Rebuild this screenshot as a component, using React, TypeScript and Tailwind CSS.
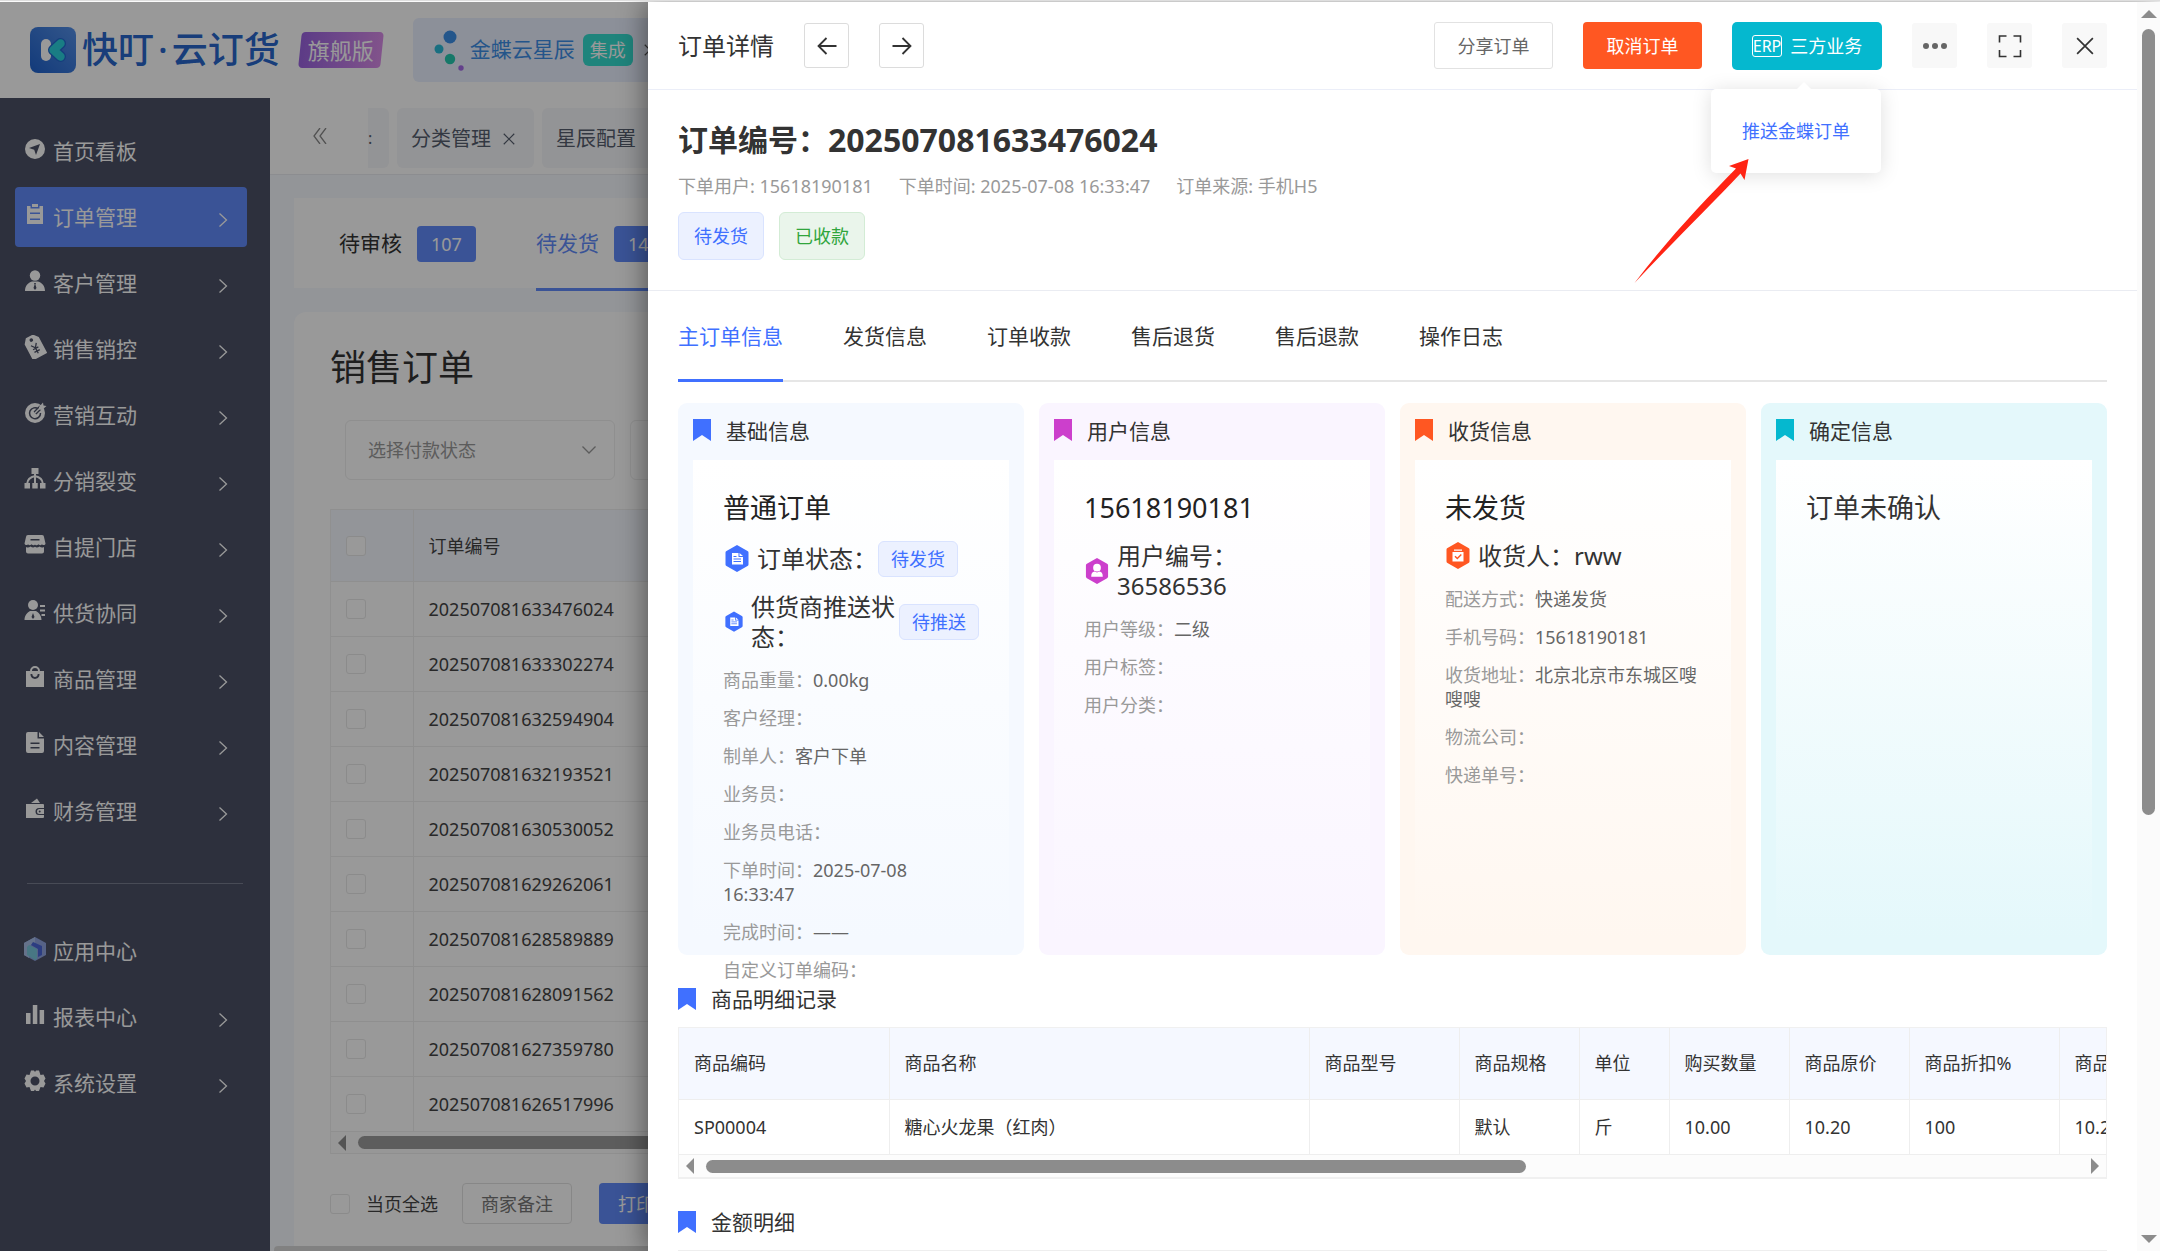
import React from "react";

type IconProps = { className?: string };

/* ---------- Sidebar icons (24 x 24 grid, solid) ---------- */

const NavIcon = ({ children }: { children: React.ReactNode }) => (
  <svg viewBox="0 0 24 24" className="mb-1 size-6 shrink-0" fill="currentColor" aria-hidden="true">
    {children}
  </svg>
);

const ICONS: Record<string, React.ReactNode> = {
  home: (
    <path fillRule="evenodd" d="M12 2a10 10 0 1 0 0 20 10 10 0 0 0 0-20Zm5 5-4 11-1.8-5.2L6 11Z" />
  ),
  order: (
    <>
      <path d="M9 1h6v3H9z" />
      <path fillRule="evenodd" d="M4 3h3.5v2.5h9V3H20v18H4V3Zm3 6.5V11h10V9.500Zm0 6V17h10v-1.500Z" />
    </>
  ),
  user: (
    <>
      <circle cx="12" cy="6.500" r="5.200" />
      <path fillRule="evenodd" d="M2 22c0-5 3-8.500 7-9.500h6c4 1 7 4.500 7 9.500Zm9-8 .6 1.500L10.500 19l1.500 2 1.500-2-1.100-3.500L13 14Z" />
    </>
  ),
  tag: (
    <g transform="rotate(-28 12 12)">
      <path fillRule="evenodd" d="M8 0h8l4 5v18H4V5Zm4 2.500a1.700 1.700 0 1 0 0 3.400 1.700 1.700 0 0 0 0-3.400Z" />
      <path d="m9 9 3 4 3-4M12 13v6M9 13.500h6M9 16.500h6" stroke="#4b5066" strokeWidth="1.300" fill="none" />
    </g>
  ),
  target: (
    <>
      <circle cx="12" cy="12" r="10" />
      <path d="M15.500 8a5.500 5.500 0 1 0 2 4" stroke="#4b5066" strokeWidth="1.500" fill="none" />
      <path d="M12 12l6-6" stroke="#4b5066" strokeWidth="4" fill="none" />
      <path d="m16 6 4-4.500.5 3 3 .5-4.500 4-3-.5Z" />
      <path d="M12 12l7-7" stroke="currentColor" strokeWidth="1.500" />
    </>
  ),
  tree: (
    <>
      <path d="M8.500 1h7v6h-7zM1.500 16H7v5.500H1.500zM9.300 16h5.400v5.500H9.300zM17 16h5.500v5.500H17z" />
      <path d="M12 6v10M12 9c-4 1-7.500 3-7.800 7.500M12 9c4 1 7.500 3 7.800 7.500" stroke="currentColor" strokeWidth="2" fill="none" />
    </>
  ),
  store: (
    <>
      <path fillRule="evenodd" d="M5 2h14a2 2 0 0 1 2 2l1.500 6.500c0 2-3.500 2-3.500.5 0 1.500-3.500 1.500-3.500 0 0 1.500-3.500 1.500-3.500.2 0 1.300-3.500 1.300-3.500-.2 0 1.500-3.500 1.500-3.500 0 0 1.500-3 1.500-3.500-.5L3 4a2 2 0 0 1 2-2Zm2.500 4v1.500h9V6Z" />
      <path d="M3 14c2 1 3 .5 4.500-.5 1.500 1 3 1.500 4.500.3 1.500 1.200 3 .7 4.500-.3 1.500 1 2.500 1.500 4.500.5v4.500a2 2 0 0 1-2 2H5a2 2 0 0 1-2-2Z" />
    </>
  ),
  supply: (
    <>
      <circle cx="10" cy="6" r="5" />
      <path fillRule="evenodd" d="M1.500 21c0-4.500 2.500-7 5.500-9h6c3 2 5.500 4.500 5.500 9Zm8.500-7-1.500 4 1.500 2 1.500-2Z" />
      <path d="M17 6h5v2h-5zM17 10.500h5v2h-5zM18.500 15H22v2h-3.500z" />
    </>
  ),
  bag: (
    <>
      <path d="M8 8V6a4 4 0 0 1 8 0v2" stroke="currentColor" strokeWidth="2" fill="none" />
      <path fillRule="evenodd" d="M3 6h18v16H3Zm4.500 3c0 6.500 9 6.500 9 0h-1.800c0 4-5.400 4-5.400 0Z" />
    </>
  ),
  doc: (
    <path fillRule="evenodd" d="M5 1h9.500v6.500H21V20a2 2 0 0 1-2 2H5a2 2 0 0 1-2-2V3a2 2 0 0 1 2-2Zm11 0 5 5h-5ZM7.500 11.500V13h9v-1.500Zm0 4.500v1.500h9V16Z" />
  ),
  wallet: (
    <>
      <path d="m8 6 6-4.500 3 4.500Z" />
      <path fillRule="evenodd" d="M3 7h17a1 1 0 0 1 1 1v3h-5a3.500 3.500 0 0 0 0 7h5v2a1 1 0 0 1-1 1H3Z" />
      <path fillRule="evenodd" d="M16.500 12H21v5h-4.500a2.500 2.500 0 0 1 0-5Zm.2 1.500a1 1 0 1 0 0 2 1 1 0 0 0 0-2Z" />
    </>
  ),
  chart: <path d="M3 10h4.500v11H3zM9.800 2h4.500v19H9.800zM16.600 7h4.500v14h-4.500z" />,
  gear: (
    <path fillRule="evenodd" d="M8 1.500h3l1 1.500 1-1.500h3l1.500 4.500 3-.5 2 4-1.500 2.500 1.500 2.500-2 4-3-.5-1.500 4h-3l-1-1.500-1 1.500H8L6.500 18l-3 .5-2-4L3 12 1.500 9.500l2-4 3 .5Zm4 6a4.500 4.500 0 1 0 0 9 4.500 4.500 0 0 0 0-9Z" />
  ),
  app: (
    <>
      <path d="M12 0l11 6v12l-11 6L1 18V6Z" fill="#8fa3e0" />
      <path d="M1 6l11-6v6L6 9v12l-5-3Z" fill="#a9bfe8" />
      <path d="M10 5l9 4v9l-4 2V12L8 8Z" fill="#4a66d8" />
      <path d="M6 8l8 4v10l-2 1-8-5V10Z" fill="#79c6dc" />
    </>
  ),
};

type NavEntry = { label: string; icon: string; arrow?: boolean; active?: boolean };

const NAV_MAIN: NavEntry[] = [
  { label: "首页看板", icon: "home", arrow: false },
  { label: "订单管理", icon: "order", active: true },
  { label: "客户管理", icon: "user" },
  { label: "销售销控", icon: "tag" },
  { label: "营销互动", icon: "target" },
  { label: "分销裂变", icon: "tree" },
  { label: "自提门店", icon: "store" },
  { label: "供货协同", icon: "supply" },
  { label: "商品管理", icon: "bag" },
  { label: "内容管理", icon: "doc" },
  { label: "财务管理", icon: "wallet" },
];

const NAV_EXTRA: NavEntry[] = [
  { label: "应用中心", icon: "app", arrow: false },
  { label: "报表中心", icon: "chart" },
  { label: "系统设置", icon: "gear" },
];

function NavList({ items }: { items: NavEntry[] }) {
  return (
    <ul className="flex flex-col gap-1.5">
      {items.map((n) => (
        <li key={n.label}>
          <a
            href="#"
            className={
              n.active
                ? "flex h-15 items-center gap-1.5 rounded-sm bg-[#628bfa] pl-2 pr-[19px] text-white"
                : "flex h-15 items-center gap-1.5 rounded-sm pl-2 pr-[19px] text-white"
            }
          >
            <NavIcon>{ICONS[n.icon]}</NavIcon>
            <span className="flex-1 pt-0.5">{n.label}</span>
            {n.arrow !== false && (
              <svg viewBox="0 0 10 16" className="mt-1.5 h-4 w-2.5" fill="none" stroke="currentColor" strokeWidth="1.300" aria-hidden="true">
                <path d="m1.500 1.500 7 6.500-7 6.500" />
              </svg>
            )}
          </a>
        </li>
      ))}
    </ul>
  );
}

/* ---------- Small shared parts ---------- */

const Bookmark = ({ className }: IconProps) => (
  <svg viewBox="0 0 18 22" className={"h-[22px] w-[18px] shrink-0 " + className} fill="currentColor" aria-hidden="true">
    <path d="M0 0h18v22l-9-6-9 6Z" />
  </svg>
);

const Cross = ({ className }: IconProps) => (
  <svg viewBox="0 0 16 16" className={"shrink-0 " + className} fill="none" stroke="currentColor" strokeWidth="1.500" aria-hidden="true">
    <path d="m1 1 14 14M15 1 1 15" />
  </svg>
);

const HexDoc = ({ className }: IconProps) => (
  <svg viewBox="0 0 24 27" className={"shrink-0 " + className} aria-hidden="true">
    <path d="M12 0 22.500 6a2 2 0 0 1 1 1.500v12a2 2 0 0 1-1 1.500L12 27 1.500 21a2 2 0 0 1-1-1.500v-12A2 2 0 0 1 1.500 6Z" fill="#4070ff" />
    <path d="M7 8h6.500v4H18v7.500H7ZM14.500 8 18 11h-3.500Z" fill="#fff" />
    <path d="M8.500 11.500h3M8.500 14h7.500M8.500 16.500h7.500" stroke="#4070ff" strokeWidth="1" />
  </svg>
);

const HexUser = ({ className }: IconProps) => (
  <svg viewBox="0 0 24 27" className={"shrink-0 " + className} aria-hidden="true">
    <path d="M12 0 22.500 6a2 2 0 0 1 1 1.500v12a2 2 0 0 1-1 1.500L12 27 1.500 21a2 2 0 0 1-1-1.500v-12A2 2 0 0 1 1.500 6Z" fill="#cc3fcc" />
    <circle cx="12" cy="10" r="4" fill="#fff" />
    <path d="M6 19.500c0-3.500 1-5 3.500-5.500l2.500 1 2.500-1c2.500.5 3.500 2 3.500 5.500Z" fill="#fff" />
  </svg>
);

const HexBox = ({ className }: IconProps) => (
  <svg viewBox="0 0 24 27" className={"shrink-0 " + className} aria-hidden="true">
    <path d="M12 0 22.500 6a2 2 0 0 1 1 1.500v12a2 2 0 0 1-1 1.500L12 27 1.500 21a2 2 0 0 1-1-1.500v-12A2 2 0 0 1 1.500 6Z" fill="#ff5722" />
    <path d="M8 7.500h8v1.300H8ZM6.500 10h11v9.500h-11Z" fill="#fff" />
    <path d="m9 14.200 2.300 2.300 4-4" stroke="#ff5722" strokeWidth="1.500" fill="none" />
  </svg>
);

const Check = ({ label }: { label: string }) => (
  <input
    type="checkbox"
    aria-label={label}
    className="block size-5 appearance-none rounded-[3px] border border-[#e8e8e8] bg-white"
  />
);

const TriLeft = () => (
  <svg viewBox="0 0 8 16" className="h-4 w-2 shrink-0" fill="#8c8c8c" aria-hidden="true">
    <path d="M8 0v16L0 8Z" />
  </svg>
);

const Tag = ({ children }: { children: React.ReactNode }) => (
  <span className="flex h-9 shrink-0 items-center rounded-md border border-[#d9e3ff] bg-[#ecf1ff] px-3 text-lg text-[#4070ff]">
    {children}
  </span>
);

function Field({ label, value }: { label: string; value?: string }) {
  return (
    <p className="text-lg leading-6 text-[#666]">
      <span className="text-[#999]">{label}：</span>
      {value}
    </p>
  );
}

const FieldList = ({ children }: { children: React.ReactNode }) => (
  <div className="flex flex-col gap-3.5 pt-4">{children}</div>
);

/* ---------- Background page ---------- */

const ORDERS = [
  "202507081633476024",
  "202507081633302274",
  "202507081632594904",
  "202507081632193521",
  "202507081630530052",
  "202507081629262061",
  "202507081628589889",
  "202507081628091562",
  "202507081627359780",
  "202507081626517996",
];

function TopBar() {
  return (
    <header className="flex h-24 shrink-0 items-center bg-white pl-[30px] shadow-sm">
      <svg viewBox="0 0 46 46" className="size-[46px]" aria-hidden="true">
        <defs>
          <linearGradient id="logoBg" x1="1" y1="0" x2="0" y2="1">
            <stop offset="0" stopColor="#5590e8" />
            <stop offset="1" stopColor="#1f62cc" />
          </linearGradient>
        </defs>
        <rect width="46" height="46" rx="8" fill="url(#logoBg)" />
        <rect x="11" y="12" width="10" height="22" rx="5" fill="#fff" />
        <path d="M30.500 16.500 23.500 23l7 6.500" fill="none" stroke="#2468cf" strokeWidth="11" strokeLinecap="round" strokeLinejoin="round" />
        <path d="M30.500 16.500 23.500 23l7 6.500" fill="none" stroke="#2ad0dc" strokeWidth="8.500" strokeLinecap="round" strokeLinejoin="round" />
      </svg>
      <span className="ml-1.5 flex text-4xl font-medium text-[#2867cc]">
        快叮<span className="mx-1">·</span>云订货
      </span>
      <span className="relative ml-5 flex h-9 w-[82px] items-center justify-center text-[22px] text-white">
        <span className="absolute inset-0 -skew-x-6 rounded bg-gradient-to-r from-[#9a63e0] to-[#d88be8]" />
        <span className="relative">旗舰版</span>
      </span>
      <div className="ml-[31px] flex h-16 w-[300px] items-center rounded-md bg-[#e9f0ff] pl-[21px] text-[21px] text-[#3d8ee6]">
        <svg viewBox="0 0 32 42" className="h-[42px] w-8" aria-hidden="true">
          <circle cx="16" cy="8" r="6.500" fill="#3d8fe8" />
          <circle cx="5" cy="20" r="4.500" fill="#2bbad8" />
          <circle cx="16" cy="30" r="5.200" fill="#26c9b0" />
          <circle cx="27" cy="39" r="2.700" fill="#a66be8" />
        </svg>
        <span className="ml-1">金蝶云星辰</span>
        <span className="ml-2 flex h-8 items-center rounded-md bg-[#34dccf] px-[7px] text-lg text-white">集成</span>
        <Cross className="ml-[11px] size-3 text-[#555]" />
      </div>
    </header>
  );
}

function Sidebar() {
  return (
    <nav className="w-[270px] shrink-0 bg-[#4b5066] pt-[23px] pl-[15px] pr-[23px] text-[21px]">
      <NavList items={NAV_MAIN} />
      <hr className="mt-[42px] mr-1 mb-[37px] ml-3 border-[#787d8f]" />
      <NavList items={NAV_EXTRA} />
    </nav>
  );
}

function OrdersPage() {
  return (
    <main className="flex min-w-0 flex-1 flex-col overflow-hidden bg-[#f6f9fe]">
      <div className="flex h-[77px] shrink-0 items-start border-b border-[#eaecf0] bg-white pt-2.5 pl-[43px] text-xl text-[#555e6e]">
        <svg viewBox="0 0 14 16" className="mt-5 h-4 w-3.5 text-[#888]" fill="none" stroke="currentColor" strokeWidth="1.300" aria-hidden="true">
          <path d="M7 0 1 8l6 8M13 0 7 8l6 8" />
        </svg>
        <div className="ml-[41px] flex h-15 w-[21px] items-center rounded-r-md bg-[#f6f7fa] text-base">:</div>
        <div className="ml-2 flex h-15 w-[137px] shrink-0 items-center rounded-md bg-[#f6f7fa] pt-0.5 pl-3.5">
          分类管理
          <Cross className="ml-3 size-3" />
        </div>
        <div className="ml-2 flex h-15 w-[137px] shrink-0 items-center rounded-md bg-[#f6f7fa] pt-0.5 pl-3.5">星辰配置</div>
      </div>

      <div className="mt-[23px] ml-6 flex h-[90px] shrink-0 gap-[60px] bg-white pl-[45px] text-[21px]">
        <button type="button" className="flex items-center gap-[15px] pt-0.5 text-[#333]">
          待审核
          <span className="flex h-9 items-center rounded bg-[#628bfa] px-3.5 text-lg text-white">107</span>
        </button>
        <button type="button" className="relative flex items-center gap-[15px] pt-0.5 text-[#628bfa]">
          待发货
          <span className="flex h-9 items-center rounded bg-[#628bfa] px-3.5 text-lg text-white">1425</span>
          <span className="absolute inset-x-0 top-full h-[3px] bg-[#628bfa]" />
        </button>
      </div>

      <section className="mt-6 ml-6 flex-1 rounded-tl-xl bg-white pt-[33px] pl-9">
        <h1 className="text-4xl leading-[46px] text-[#333]">销售订单</h1>
        <div className="mt-[29px] ml-[15px] flex gap-[15px]">
          {["选择付款状态", "选择发货状态"].map((t) => (
            <div key={t} className="relative flex shrink-0 items-center">
              <select aria-label={t} className="h-15 w-[270px] appearance-none rounded-md border border-[#eee] bg-white pl-[22px] text-lg text-[#999]">
                <option>{t}</option>
              </select>
              <svg viewBox="0 0 14 8" className="pointer-events-none absolute right-[19px] h-2 w-3.5 text-[#999]" fill="none" stroke="currentColor" strokeWidth="1.300" aria-hidden="true">
                <path d="m.5.5 6.500 6.500 6.500-6.500" />
              </svg>
            </div>
          ))}
        </div>

        <div className="mt-[29px] overflow-hidden border-l border-[#f0f0f0]">
          <table className="w-full border-collapse text-left text-lg text-[#444]">
            <thead>
              <tr className="h-[72px] border-y border-[#eee] bg-[#f5f8ff]">
                <th className="w-[82px] border-r border-[#eee] pl-[15px] font-normal">
                  <Check label="全选" />
                </th>
                <th className="pl-[15px] font-normal">订单编号</th>
              </tr>
            </thead>
            <tbody>
              {ORDERS.map((o) => (
                <tr key={o} className="h-[55px] border-b border-[#eee]">
                  <td className="border-r border-[#eee] pl-[15px]">
                    <Check label={o} />
                  </td>
                  <td className="pl-[15px]">{o}</td>
                </tr>
              ))}
            </tbody>
          </table>
          <div className="flex h-[22px] items-center gap-3 border-b border-[#eee] bg-[#fcfcfc] pl-[7px]">
            <TriLeft />
            <div className="h-[13px] flex-1 rounded-full bg-[#9c9c9c]" />
          </div>
        </div>

        <div className="mt-[29px] flex items-center text-lg">
          <label className="flex items-center gap-4 text-[#444]">
            <Check label="当页全选" />
            当页全选
          </label>
          <button type="button" className="ml-6 h-[41px] w-[110px] rounded-sm border border-[#e2e2e2] text-[#777]">
            商家备注
          </button>
          <button type="button" className="ml-[27px] h-[41px] rounded-sm bg-[#628bfa] px-[19px] text-white">
            打印订单
          </button>
        </div>
      </section>
      <div className="ml-1 h-[5px] shrink-0 rounded-t bg-[#d8d8d8]" />
    </main>
  );
}

/* ---------- Drawer ---------- */

function DrawerHeader() {
  return (
    <div className="flex h-[90px] items-center border-b border-[#ebeef8] px-[30px] pt-px text-lg">
      <h2 className="text-2xl text-[#333]">订单详情</h2>
      <button type="button" aria-label="上一单" className="ml-[30px] flex size-[45px] items-center justify-center rounded-[3px] border border-[#dcdcdc] text-[#333]">
        <svg viewBox="0 0 20 18" className="h-[18px] w-5" fill="none" stroke="currentColor" strokeWidth="1.800" aria-hidden="true">
          <path d="M19.500 9H1M9.500 1 1.500 9l8 8" />
        </svg>
      </button>
      <button type="button" aria-label="下一单" className="ml-[30px] flex size-[45px] items-center justify-center rounded-[3px] border border-[#dcdcdc] text-[#333]">
        <svg viewBox="0 0 20 18" className="h-[18px] w-5" fill="none" stroke="currentColor" strokeWidth="1.800" aria-hidden="true">
          <path d="M.5 9H19M10.500 1l8 8-8 8" />
        </svg>
      </button>

      <div className="ml-auto flex items-center gap-[30px]">
        <button type="button" className="h-[47px] w-[119px] rounded-[3px] border border-[#e2e2e2] text-[#666]">
          分享订单
        </button>
        <button type="button" className="h-[47px] w-[119px] rounded bg-[#ff5722] text-white">
          取消订单
        </button>
        <div className="relative">
          <button type="button" className="flex h-12 w-[150px] items-center justify-center gap-2 rounded-[5px] bg-[#05b8cf] text-white">
            <span className="flex h-[22px] items-center rounded-[3px] border border-white text-base leading-5">ERP</span>
            三方业务
          </button>
          <div className="absolute top-full right-px z-20 mt-[19px] rounded-[5px] bg-white px-[31px] py-7 shadow-[0_2px_20px_rgba(0,0,0,0.13)]">
            <svg viewBox="0 0 16 9" className="absolute -top-2 left-1/2 h-[9px] w-4" aria-hidden="true">
              <path d="m0 9 8-8 8 8Z" fill="#fff" />
            </svg>
            <a href="#" className="block whitespace-nowrap leading-7 text-[#4070ff]">
              推送金蝶订单
            </a>
          </div>
        </div>
        <button type="button" aria-label="更多" className="flex size-[45px] items-center justify-center rounded-[3px] bg-[#f8f8f8]">
          <svg viewBox="0 0 24 6" className="h-1.5 w-6" fill="#666" aria-hidden="true">
            <circle cx="3" cy="3" r="3" />
            <circle cx="12" cy="3" r="3" />
            <circle cx="21" cy="3" r="3" />
          </svg>
        </button>
        <button type="button" aria-label="全屏" className="flex size-[45px] items-center justify-center rounded-[3px] bg-[#f8f8f8] text-[#333]">
          <svg viewBox="0 0 24 24" className="size-6" fill="none" stroke="currentColor" strokeWidth="1.600" aria-hidden="true">
            <path d="M8.500 2H1.500v6.500M15.500 2H22.500v6.500M8.500 22.500H1.500v-6.500M15.500 22.500H22.500v-6.500" />
          </svg>
        </button>
        <button type="button" aria-label="关闭" className="flex size-[45px] items-center justify-center rounded-[3px] bg-[#f8f8f8] text-[#333]">
          <Cross className="size-[18px]" />
        </button>
      </div>
    </div>
  );
}

const TABS = ["主订单信息", "发货信息", "订单收款", "售后退货", "售后退款", "操作日志"];

function Card({
  title,
  mark,
  tone,
  inner,
  children,
}: {
  title: string;
  mark: string;
  tone: string;
  inner: string;
  children: React.ReactNode;
}) {
  return (
    <section className={"flex h-[552px] flex-col rounded-[9px] px-[15px] pb-[15px] " + tone}>
      <h3 className="flex h-[57px] shrink-0 items-center gap-[15px] pt-0.5 text-[21px] text-[#333]">
        <Bookmark className={"mb-1 " + mark} />
        {title}
      </h3>
      <div className={"min-h-0 flex-1 bg-gradient-to-b from-white px-[30px] pt-[30px] " + inner}>{children}</div>
    </section>
  );
}

const COLUMNS: { head: string; value: string; width: string }[] = [
  { head: "商品编码", value: "SP00004", width: "w-[210px]" },
  { head: "商品名称", value: "糖心火龙果（红肉）", width: "w-[420px]" },
  { head: "商品型号", value: "", width: "w-[150px]" },
  { head: "商品规格", value: "默认", width: "w-[120px]" },
  { head: "单位", value: "斤", width: "w-[90px]" },
  { head: "购买数量", value: "10.00", width: "w-[120px]" },
  { head: "商品原价", value: "10.20", width: "w-[120px]" },
  { head: "商品折扣%", value: "100", width: "w-[150px]" },
  { head: "商品单价", value: "10.20", width: "w-[150px]" },
];

function OrderDrawer() {
  return (
    <aside className="absolute top-0 right-0 bottom-0 flex w-[70%] bg-white shadow-[-4px_0_24px_rgba(0,0,0,0.4)]">
      <div className="relative flex min-w-0 flex-1 flex-col overflow-hidden">
        <DrawerHeader />

        <div className="h-[201px] shrink-0 border-b border-[#eaecf2] px-[30px] pt-[30px]">
          <h1 className="flex items-center text-3xl leading-10 font-bold text-[#333]">
            订单编号：<span className="text-[32px]">202507081633476024</span>
          </h1>
          <p className="mt-3.5 flex gap-[26px] text-lg leading-6 text-[#999]">
            <span>下单用户: 15618190181</span>
            <span>下单时间: 2025-07-08 16:33:47</span>
            <span>订单来源: 手机H5</span>
          </p>
          <div className="mt-3.5 flex gap-[15px] text-lg">
            <span className="flex h-12 items-center rounded-md border border-[#d9e3ff] bg-[#ecf1ff] px-[15px] text-[#4070ff]">待发货</span>
            <span className="flex h-12 items-center rounded-md border border-[#d3ecd5] bg-[#eaf5eb] px-[15px] text-[#30a53c]">已收款</span>
          </div>
        </div>

        <div className="px-[30px]">
          <div role="tablist" className="flex h-[91px] gap-15 border-b-2 border-[#e6e6e6] text-[21px]">
            {TABS.map((t, i) => (
              <button
                key={t}
                type="button"
                role="tab"
                aria-selected={i === 0}
                className={
                  i === 0
                    ? "relative h-[91px] border-b-[3px] border-[#4070ff] pt-1 text-[#4070ff]"
                    : "relative h-[91px] border-b-[3px] border-transparent pt-1 text-[#333]"
                }
              >
                {t}
              </button>
            ))}
          </div>

          <div className="mt-[21px] grid grid-cols-4 gap-[15px]">
            <Card title="基础信息" mark="text-[#4070ff]" tone="bg-[#f5f9ff]" inner="to-[#f5f9ff]">
              <h4 className="text-[27px] leading-9 text-[#222]">普通订单</h4>
              <div className="mt-[15px] flex items-center text-2xl leading-[30px] text-[#333]">
                <HexDoc className="mx-0.5 h-[27px] w-6" />
                <span className="ml-1.5 w-[121px]">订单状态：</span>
                <Tag>待发货</Tag>
              </div>
              <div className="mt-[15px] flex items-center text-2xl leading-[30px] text-[#333]">
                <HexDoc className="ml-0.5 h-[21px] w-[18px]" />
                <span className="mr-1 ml-2 flex-1">供货商推送状态：</span>
                <Tag>待推送</Tag>
              </div>
              <FieldList>
                <Field label="商品重量" value="0.00kg" />
                <Field label="客户经理" />
                <Field label="制单人" value="客户下单" />
                <Field label="业务员" />
                <Field label="业务员电话" />
                <Field label="下单时间" value="2025-07-08 16:33:47" />
                <Field label="完成时间" value="——" />
                <Field label="自定义订单编码" />
              </FieldList>
            </Card>

            <Card title="用户信息" mark="text-[#cc3fcc]" tone="bg-[#faf5ff]" inner="to-[#faf5ff]">
              <h4 className="text-[27px] leading-9 text-[#222]">15618190181</h4>
              <div className="mt-[15px] flex items-center text-2xl leading-[30px] text-[#333]">
                <HexUser className="mr-2 ml-px h-[26px] w-6" />
                <span>用户编号：36586536</span>
              </div>
              <FieldList>
                <Field label="用户等级" value="二级" />
                <Field label="用户标签" />
                <Field label="用户分类" />
              </FieldList>
            </Card>

            <Card title="收货信息" mark="text-[#ff5722]" tone="bg-[#fff7f0]" inner="to-[#fff7f0]">
              <h4 className="text-[27px] leading-9 text-[#222]">未发货</h4>
              <div className="mt-[15px] flex items-center text-2xl leading-[30px] text-[#333]">
                <HexBox className="mr-2 ml-px h-[27px] w-6" />
                <span>收货人：rww</span>
              </div>
              <FieldList>
                <Field label="配送方式" value="快递发货" />
                <Field label="手机号码" value="15618190181" />
                <Field label="收货地址" value="北京北京市东城区嗖嗖嗖" />
                <Field label="物流公司" />
                <Field label="快递单号" />
              </FieldList>
            </Card>

            <Card title="确定信息" mark="text-[#05b8cf]" tone="bg-[#e4f8fb]" inner="to-[#e4f8fb]">
              <h4 className="text-[27px] leading-9 text-[#333]">订单未确认</h4>
            </Card>
          </div>

          <h3 className="mt-[29px] flex h-8 items-center gap-[15px] text-[21px] text-[#333]">
            <Bookmark className="mb-0.5 text-[#4070ff]" />
            商品明细记录
          </h3>

          <div className="mt-[11px] overflow-hidden border-x border-t border-b-2 border-[#f0f0f0]">
            <table className="w-[1530px] table-fixed border-collapse text-left text-lg text-[#333]">
              <thead>
                <tr className="h-[72px] border-b border-[#eee] bg-[#f5f8ff]">
                  {COLUMNS.map((c) => (
                    <th key={c.head} className={"border-r border-[#eee] pl-[15px] font-normal " + c.width}>
                      {c.head}
                    </th>
                  ))}
                </tr>
              </thead>
              <tbody>
                <tr className="h-[55px] border-b border-[#eee]">
                  {COLUMNS.map((c) => (
                    <td key={c.head} className="border-r border-[#eee] pl-[15px]">
                      {c.value}
                    </td>
                  ))}
                </tr>
              </tbody>
            </table>
            <div className="flex h-[22px] items-center bg-[#fcfcfc] px-[7px]">
              <TriLeft />
              <div className="ml-3 h-[13px] w-[58%] rounded-full bg-[#8c8c8c]" />
              <svg viewBox="0 0 8 16" className="ml-auto h-4 w-2" fill="#8c8c8c" aria-hidden="true">
                <path d="M0 0v16l8-8Z" />
              </svg>
            </div>
          </div>

          <h3 className="mt-7 flex h-8 items-center gap-[15px] text-[21px] text-[#333]">
            <Bookmark className="mb-0.5 text-[#4070ff]" />
            金额明细
          </h3>
          <hr className="mt-[11px] border-[#eee]" />
        </div>

        {/* pointer annotation aimed at the push action */}
        <svg viewBox="0 0 116 126" className="absolute top-[157px] right-[387px] z-30 h-[126px] w-[116px]" aria-hidden="true">
          <path d="M114.500 0 95 7l7 2.500C70 42 34 80 .5 124 38 84 74 49 106.500 14.500l4 6.500Z" fill="#ff2414" />
        </svg>
      </div>

      <div className="flex w-[23px] shrink-0 flex-col items-center bg-[#fbfbfb] py-2">
        <svg viewBox="0 0 16 8" className="h-2 w-4" fill="#8c8c8c" aria-hidden="true">
          <path d="M8 0l8 8H0Z" />
        </svg>
        <div className="mt-[11px] h-[786px] w-[13px] rounded-full bg-[#8c8c8c]" />
        <svg viewBox="0 0 16 8" className="mt-auto h-2 w-4" fill="#8c8c8c" aria-hidden="true">
          <path d="M0 0h16L8 8Z" />
        </svg>
      </div>
    </aside>
  );
}

export default function App() {
  return (
    <div
      lang="zh-CN"
      className="flex h-screen flex-col overflow-hidden border-t border-[#dedede] bg-white pt-px font-['Noto_Sans','Noto_Sans_CJK_SC',sans-serif]"
    >
      <div className="relative flex min-h-0 flex-1 flex-col">
        <TopBar />
        <div className="flex min-h-0 flex-1">
          <Sidebar />
          <OrdersPage />
        </div>
        <div className="absolute inset-0 bg-black/40" />
        <OrderDrawer />
      </div>
    </div>
  );
}
